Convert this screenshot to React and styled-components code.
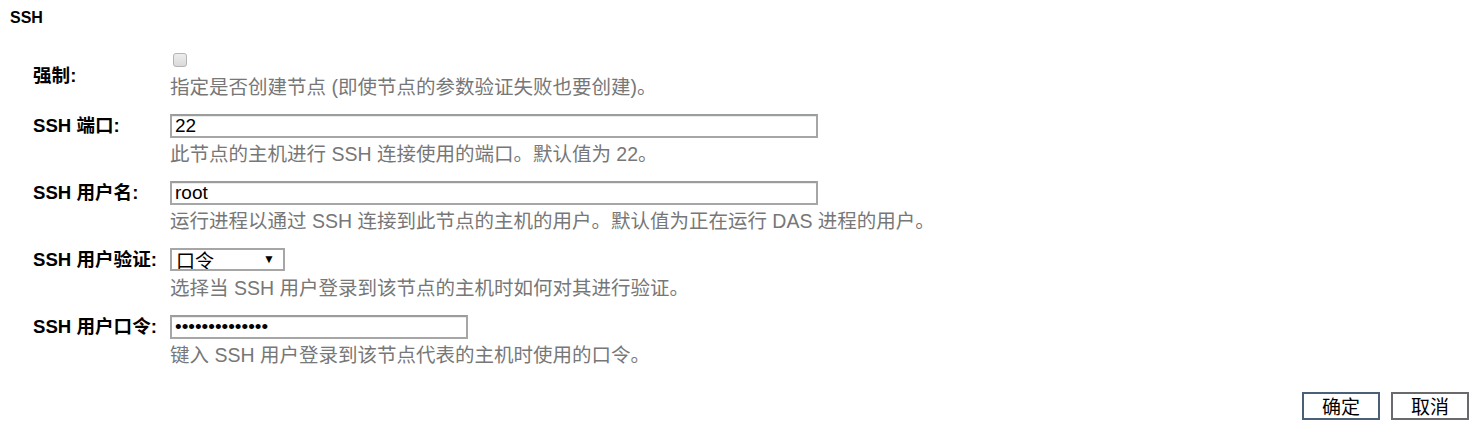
import React from 'react';
import styled, { createGlobalStyle } from 'styled-components';

const GlobalStyle = createGlobalStyle`
  body {
    margin: 0;
    background: #fff;
    font-family: "Liberation Sans", Arial, "Noto Sans CJK SC", sans-serif;
    color: #000;
  }
`;

const Page = styled.div`
  width: 1479px;
  height: 436px;
  box-sizing: border-box;
  padding: 8px 10px 0 10px;
  display: flex;
  flex-direction: column;
`;

const Heading = styled.h3`
  margin: 0 0 22px 0;
  font-size: 16px;
  line-height: 20px;
  font-weight: bold;
`;

const Form = styled.div`
  display: flex;
  flex-direction: column;
  gap: 17px;
  padding-left: 23px;
`;

const Row = styled.div`
  display: flex;
  align-items: flex-start;
`;

const Label = styled.label`
  width: 137px;
  flex: none;
  font-size: 18.6px;
  font-weight: bold;
  line-height: 24px;
  white-space: nowrap;
  padding-top: ${p => p.$offset || 0}px;
`;

const Field = styled.div`
  display: flex;
  flex-direction: column;
  align-items: flex-start;
`;

const CheckLine = styled.div`
  height: 20px;
  display: flex;
  align-items: flex-start;
  padding-top: 3px;
  box-sizing: border-box;
`;

const Check = styled.input`
  appearance: none;
  margin: 0 0 0 3px;
  width: 14px;
  height: 14px;
  border: 1px solid #b4b4b4;
  border-radius: 3px;
  background: linear-gradient(#ededed, #dadada);
  box-sizing: border-box;
`;

const TextInput = styled.input`
  width: ${p => p.$w}px;
  height: 24px;
  box-sizing: border-box;
  margin: 0;
  padding: 0 3px;
  border: 2px solid #a6a6a6;
  border-top-color: #9c9c9c;
  box-shadow: inset 0 1px 0 #e8ecea;
  font-family: "Liberation Sans", Arial, sans-serif;
  font-size: 19px;
  line-height: 20px;
  color: #000;
  outline: none;
`;

const SelectWrap = styled.div`
  position: relative;
  width: 115px;
  height: 23px;
`;

const Select = styled.select`
  appearance: none;
  width: 100%;
  height: 100%;
  box-sizing: border-box;
  margin: 0;
  padding: 0 0 0 4px;
  border: 2px solid #a6a6a6;
  border-radius: 0;
  background: #fff;
  font-family: "Noto Sans CJK SC", sans-serif;
  font-size: 19px;
  line-height: 19px;
  color: #000;
  outline: none;
`;

const Arrow = styled.span`
  position: absolute;
  right: 10px;
  top: 3px;
  font-size: 12px;
  line-height: 16px;
  pointer-events: none;
`;

const Help = styled.div`
  margin-top: ${p => p.$gap ?? 6}px;
  font-size: 19.5px;
  line-height: 20px;
  color: #777;
  white-space: nowrap;
`;

const Actions = styled.div`
  margin-top: 27px;
  display: flex;
  justify-content: flex-end;
  gap: 11px;
`;

const Button = styled.button`
  width: 78px;
  height: 28px;
  margin: 0;
  padding: 0;
  background: #fff;
  border: 2px solid ${p => (p.$primary ? '#4a5f78' : '#6a6a6e')};
  font-family: "Noto Sans CJK SC", sans-serif;
  font-size: 19px;
  line-height: 22px;
  color: #000;
`;

export default function App() {
  return (
    <Page>
      <GlobalStyle />
      <Heading>SSH</Heading>
      <Form>
        <Row>
          <Label $offset={14}>强制:</Label>
          <Field>
            <CheckLine>
              <Check type="checkbox" />
            </CheckLine>
            <Help $gap={7}>指定是否创建节点 (即使节点的参数验证失败也要创建)。</Help>
          </Field>
        </Row>
        <Row>
          <Label>SSH 端口:</Label>
          <Field>
            <TextInput $w={648} defaultValue="22" />
            <Help>此节点的主机进行 SSH 连接使用的端口。默认值为 22。</Help>
          </Field>
        </Row>
        <Row>
          <Label>SSH 用户名:</Label>
          <Field>
            <TextInput $w={648} defaultValue="root" />
            <Help>运行进程以通过 SSH 连接到此节点的主机的用户。默认值为正在运行 DAS 进程的用户。</Help>
          </Field>
        </Row>
        <Row>
          <Label>SSH 用户验证:</Label>
          <Field>
            <SelectWrap>
              <Select defaultValue="pw">
                <option value="pw">口令</option>
                <option value="key">密钥文件</option>
              </Select>
              <Arrow>▼</Arrow>
            </SelectWrap>
            <Help $gap={7}>选择当 SSH 用户登录到该节点的主机时如何对其进行验证。</Help>
          </Field>
        </Row>
        <Row>
          <Label>SSH 用户口令:</Label>
          <Field>
            <TextInput $w={298} type="password" defaultValue="adminpassword1" />
            <Help>键入 SSH 用户登录到该节点代表的主机时使用的口令。</Help>
          </Field>
        </Row>
      </Form>
      <Actions>
        <Button $primary>确定</Button>
        <Button>取消</Button>
      </Actions>
    </Page>
  );
}
